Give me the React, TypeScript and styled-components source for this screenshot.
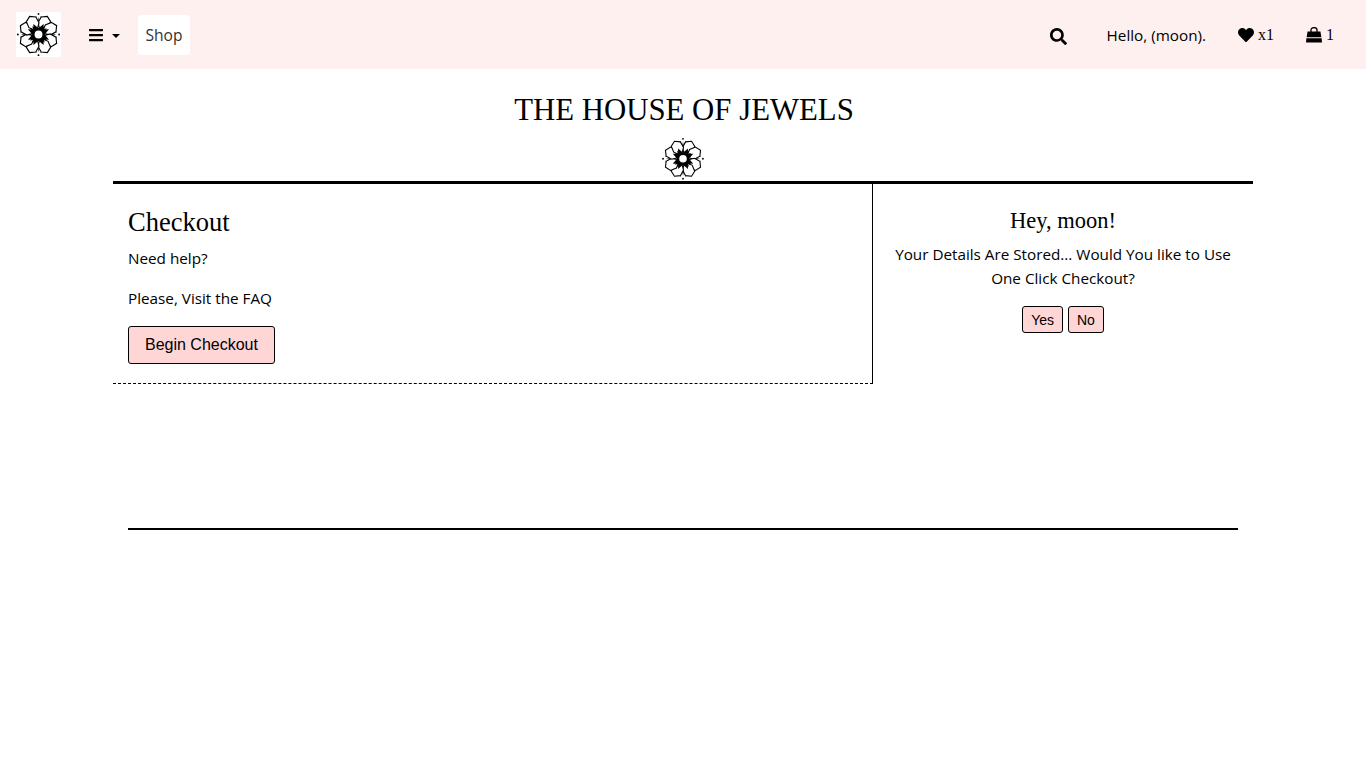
import React from "react";
import styled, { createGlobalStyle } from "styled-components";
import { FaBars, FaSearch, FaHeart } from "react-icons/fa";

const Global = createGlobalStyle`
  html, body { margin: 0; padding: 0; background: #fff; }
  body { font-family: "Open Sans", "Noto Sans", sans-serif; color: #000; font-size: 15.25px; }
`;

const Nav = styled.nav`
  height: 69px;
  background: #fff0f0;
  display: flex;
  align-items: center;
  padding: 0 32px 0 16px;
`;
const LogoBox = styled.div`
  width: 45px;
  height: 45px;
  background: #fff;
  display: flex;
  align-items: center;
  justify-content: center;
  margin-right: 27px;
`;
const Burger = styled.div`
  display: flex;
  align-items: center;
  font-size: 16px;
  margin-right: 18px;
`;
const Caret = styled.span`
  width: 0;
  height: 0;
  margin-left: 8px;
  margin-top: 3px;
  border-left: 4.5px solid transparent;
  border-right: 4.5px solid transparent;
  border-top: 4.5px solid #000;
`;
const ShopLink = styled.a`
  width: 52px;
  height: 40px;
  background: #fff;
  border-radius: 3px;
  color: #333;
  font-size: 15.6px;
  display: flex;
  align-items: center;
  justify-content: center;
`;
const NavRight = styled.div`
  margin-left: auto;
  display: flex;
  align-items: center;
`;
const SearchIcon = styled.span`
  display: flex;
  font-size: 17px;
  margin-right: 40px;
  margin-top: 3px;
`;
const Hello = styled.span`
  margin-right: 32px;
`;
const Counter = styled.span<{ $gap: number }>`
  display: flex;
  align-items: center;
  gap: 4px;
  font-family: "Liberation Serif", serif;
  font-size: 16px;
  margin-right: ${(p) => p.$gap}px;
`;

const Main = styled.main`
  width: 1140px;
  margin: 0 auto;
`;
const Header = styled.header`
  display: flex;
  flex-direction: column;
  align-items: center;
  height: 112px;
  border-bottom: 3px solid #000;
  overflow: hidden;
`;
const Title = styled.h1`
  margin: 23px 0 0 2px;
  height: 46px;
  font-family: "Liberation Serif", serif;
  font-weight: 400;
  font-size: 30.8px;
  line-height: 37px;
`;
const Columns = styled.div`
  display: grid;
  grid-template-columns: 760px 380px;
`;
const LeftCol = styled.section`
  height: 200px;
  box-sizing: border-box;
  padding: 20px 15px 0;
  border-right: 1px solid #000;
  border-bottom: 1px dashed #000;
`;
const RightCol = styled.section`
  padding: 21px 15px 0;
  text-align: center;
`;
const Heading = styled.h2`
  margin: 0 0 6px;
  font-family: "Liberation Serif", serif;
  font-weight: 400;
  font-size: 26.5px;
  line-height: 36px;
`;
const SideHeading = styled.h3`
  margin: 0 0 5px;
  font-family: "Liberation Serif", serif;
  font-weight: 400;
  font-size: 22.5px;
  line-height: 32px;
`;
const Para = styled.p`
  margin: 0 0 16px;
  line-height: 24px;
`;
const PinkButton = styled.button<{ $large?: boolean }>`
  box-sizing: border-box;
  background: #ffd6d6;
  color: #000;
  border: 1px solid #000;
  border-radius: 3px;
  font-family: "Liberation Sans", sans-serif;
  font-size: ${(p) => (p.$large ? 16 : 14)}px;
  height: ${(p) => (p.$large ? 38 : 27)}px;
  padding: 0 ${(p) => (p.$large ? 16 : 8)}px;
`;
const Buttons = styled.div`
  display: flex;
  justify-content: center;
  gap: 5px;
  margin-top: 2px;
`;
const FooterRule = styled.hr`
  width: 1110px;
  height: 2px;
  margin: 144px auto 0;
  border: 0;
  background: #000;
`;

const CARDINAL = [0, 90, 180, 270];
const PETALS = [26, 64, 116, 154, 206, 244, 296, 334];

const Flower = ({ size }: { size: number }) => (
  <svg width={size} height={size} viewBox="-24 -24 48 48" aria-hidden="true">
    {CARDINAL.map((a) => (
      <g key={a} transform={`rotate(${a})`}>
        <path d="M-2.6 -8 L0 -19 L2.6 -8 Z" fill="#666" />
        <circle cx="0" cy="-22" r="1" fill="#000" />
        <circle cx="-2.6" cy="-19" r="0.5" fill="#000" />
        <circle cx="2.6" cy="-19" r="0.5" fill="#000" />
      </g>
    ))}
    {PETALS.map((a) => (
      <path
        key={a}
        d="M0 -4 L-6 -11 L-5.6 -18 L0 -21.5 L5.6 -18 L6 -11 Z"
        transform={`rotate(${a})`}
        fill="#fff"
        stroke="#000"
        strokeWidth="1.2"
        strokeLinejoin="miter"
      />
    ))}
    {PETALS.map((a) => (
      <path key={a} d="M-3.8 -4 L0 -12.5 L3.8 -4 Z" transform={`rotate(${a})`} fill="#000" />
    ))}
    {CARDINAL.map((a) => (
      <path key={a} d="M-3 -4 L-1.6 -11 L0 -8 L1.6 -11 L3 -4 Z" transform={`rotate(${a + 45})`} fill="#000" />
    ))}
    <circle r="6" fill="#000" />
    <circle r="4.2" fill="#fff" />
  </svg>
);

const BagIcon = () => (
  <svg width="16" height="16" viewBox="0 0 16 16" aria-hidden="true">
    <path d="M5 5.5 V3 A3 2.4 0 0 1 11 3 V5.5" fill="none" stroke="#000" strokeWidth="1.3" />
    <path d="M1.6 4.6 H14.4 L15.4 10.2 H0.6 Z" fill="#000" />
    <path d="M0.4 11.2 H15.6 L16 15.6 H0 Z" fill="#000" />
  </svg>
);

export default function App() {
  return (
    <>
      <Global />
      <Nav>
        <LogoBox>
          <Flower size={45} />
        </LogoBox>
        <Burger>
          <FaBars />
          <Caret />
        </Burger>
        <ShopLink>Shop</ShopLink>
        <NavRight>
          <SearchIcon>
            <FaSearch />
          </SearchIcon>
          <Hello>Hello, (moon).</Hello>
          <Counter $gap={32}>
            <FaHeart size={16} /> x1
          </Counter>
          <Counter $gap={0}>
            <BagIcon /> 1
          </Counter>
        </NavRight>
      </Nav>
      <Main>
        <Header>
          <Title>THE HOUSE OF JEWELS</Title>
          <Flower size={44} />
        </Header>
        <Columns>
          <LeftCol>
            <Heading>Checkout</Heading>
            <Para>Need help?</Para>
            <Para>Please, Visit the FAQ</Para>
            <PinkButton $large>Begin Checkout</PinkButton>
          </LeftCol>
          <RightCol>
            <SideHeading>Hey, moon!</SideHeading>
            <Para>Your Details Are Stored... Would You like to Use One Click Checkout?</Para>
            <Buttons>
              <PinkButton>Yes</PinkButton>
              <PinkButton>No</PinkButton>
            </Buttons>
          </RightCol>
        </Columns>
        <FooterRule />
      </Main>
    </>
  );
}
